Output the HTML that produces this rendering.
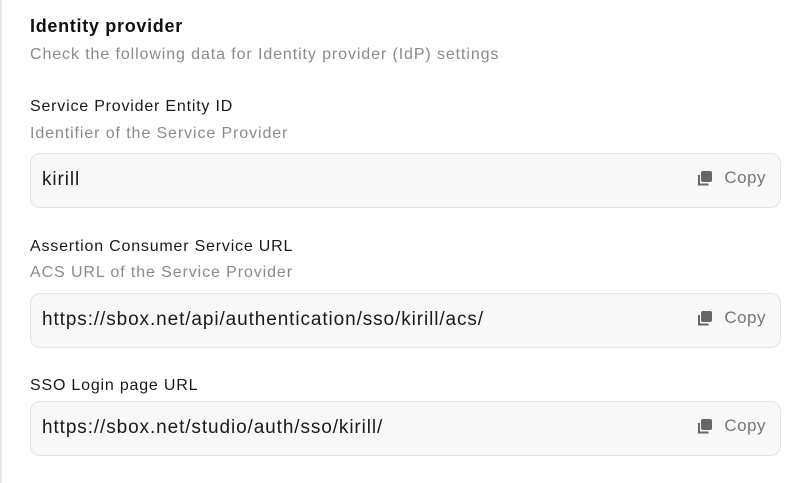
<!DOCTYPE html>
<html><head><style>
body{margin:0;width:809px;height:483px;background:#fff;font-family:"Liberation Sans",sans-serif;position:relative;overflow:hidden}
.bl{position:absolute;left:0;top:0;width:2px;height:483px;background:#e6e6e6}
.t{position:absolute;left:30px;white-space:nowrap}
.h{font-size:18px;font-weight:bold;color:#111;letter-spacing:0.7px}
.s{font-size:16px;color:#8a8a8a;letter-spacing:0.9px}
.l{font-size:16px;color:#1a1a1a;letter-spacing:0.8px}
.box{position:absolute;left:30px;width:749px;height:53px;border:1px solid #e4e4e4;border-radius:10px;background:#f8f8f8}
.v{position:absolute;left:11px;top:15px;font-size:19px;color:#1a1a1a;letter-spacing:0.9px}
.c{position:absolute;right:14px;top:14px;font-size:17px;color:#777;display:flex;align-items:center;gap:11px;letter-spacing:0.5px}
</style></head><body>
<div class="bl"></div>
<div class="t h" style="top:16px">Identity provider</div>
<div class="t s" style="top:46px">Check the following data for Identity provider (IdP) settings</div>
<div class="t l" style="top:98px">Service Provider Entity ID</div>
<div class="t s" style="top:125px">Identifier of the Service Provider</div>
<div class="box" style="top:153px"><div class="v">kirill</div><div class="c"><svg width="17" height="17" viewBox="0 0 17 17"><rect x="5" y="1" width="11" height="11" rx="2" fill="#666"/><path d="M3 5v9.5h9.5" fill="none" stroke="#666" stroke-width="2"/></svg>Copy</div></div>
<div class="t l" style="top:238px">Assertion Consumer Service URL</div>
<div class="t s" style="top:264px">ACS URL of the Service Provider</div>
<div class="box" style="top:293px"><div class="v">https://sbox.net/api/authentication/sso/kirill/acs/</div><div class="c"><svg width="17" height="17" viewBox="0 0 17 17"><rect x="5" y="1" width="11" height="11" rx="2" fill="#666"/><path d="M3 5v9.5h9.5" fill="none" stroke="#666" stroke-width="2"/></svg>Copy</div></div>
<div class="t l" style="top:377px">SSO Login page URL</div>
<div class="box" style="top:401px"><div class="v">https://sbox.net/studio/auth/sso/kirill/</div><div class="c"><svg width="17" height="17" viewBox="0 0 17 17"><rect x="5" y="1" width="11" height="11" rx="2" fill="#666"/><path d="M3 5v9.5h9.5" fill="none" stroke="#666" stroke-width="2"/></svg>Copy</div></div>
</body></html>
